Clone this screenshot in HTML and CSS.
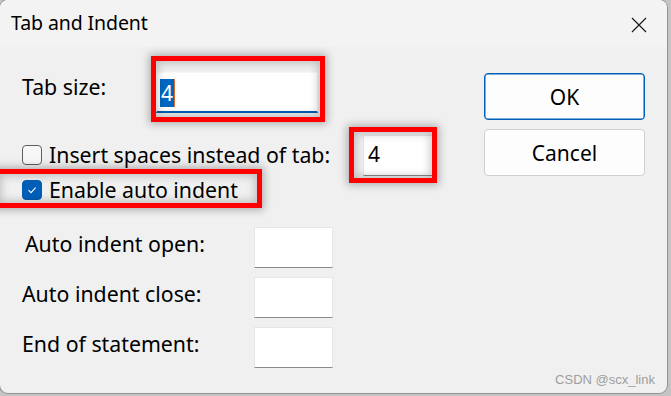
FILE: index.html
```html
<!DOCTYPE html>
<html>
<head>
<meta charset="utf-8">
<link rel="stylesheet" href="styles.css">
</head>
<body>
<div class="desk">
  <div class="dialog">
    <div class="titlebar">
      <span class="title">Tab and Indent</span>
      <svg class="close" width="16" height="16" viewBox="0 0 16 16"><path d="M1 1 L15 15 M15 1 L1 15" stroke="#1b1b1b" stroke-width="1.2" fill="none"/></svg>
    </div>
    <div class="body">
      <div class="form">
        <div class="row r-tab">
          <span class="lbl lbl-tab">Tab size:</span>
          <div class="input wide focused"><span class="sel">4</span><span class="caret"></span></div>
        </div>
        <div class="row r-spaces">
          <span class="cb"></span>
          <span class="lbl lbl-spaces">Insert spaces instead of tab:</span>
          <div class="input mid">4</div>
        </div>
        <div class="row r-auto">
          <span class="cb checked"><svg width="12" height="12" viewBox="0 0 12 12"><path d="M2.5 6.2 L5 8.6 L9.6 3.6" stroke="#fff" stroke-width="1.1" fill="none"/></svg></span>
          <span class="lbl">Enable auto indent</span>
        </div>
        <div class="grid3">
          <span class="lbl glbl glbl-open">Auto indent open:</span><div class="input small"></div>
          <span class="lbl glbl">Auto indent close:</span><div class="input small"></div>
          <span class="lbl glbl">End of statement:</span><div class="input small"></div>
        </div>
      </div>
      <div class="buttons">
        <button class="btn btn-default">OK</button>
        <button class="btn">Cancel</button>
      </div>
    </div>
    <div class="mark mark-tab"></div>
    <div class="mark mark-spaces"></div>
    <div class="mark mark-auto"></div>
    <div class="watermark">CSDN @scx_link</div>
  </div>
</div>
</body>
</html>
```
FILE: styles.css
```css
html, body { margin: 0; padding: 0; }
body { width: 671px; height: 396px; overflow: hidden; background: #b9b9b9; font-family: "Noto Sans", "Open Sans", sans-serif; }
.desk { width: 671px; height: 396px; background: #c4c4c4; }
.dialog { position: relative; width: 667px; height: 393px; background: #f0f0f0; border-radius: 8px; box-shadow: 0 0 0 1px rgba(0,0,0,0.25); overflow: hidden; }
.titlebar { height: 47px; background: #f3f3f3; display: flex; align-items: center; justify-content: space-between; padding: 0 20px 0 11px; }
.title { font-size: 19.5px; color: #000; margin-top: -2px; letter-spacing: -0.1px; }
.close { margin-top: 2px; }
.body { display: flex; justify-content: space-between; padding: 0 22px 0 22px; }
.form { display: flex; flex-direction: column; }
.lbl { font-size: 21.3px; line-height: 24px; color: #000; white-space: nowrap; }
.row { display: flex; align-items: flex-start; }
.r-tab { margin-top: 25px; height: 41px; }
.lbl-tab { width: 134px; margin-top: 3px; }
.r-spaces { margin-top: 22px; height: 41px; }
.r-spaces .cb { margin-top: 10px; }
.lbl-spaces { margin-top: 8px; width: 314px; }
.r-auto { margin-top: 2px; height: 24px; }
.r-auto .cb { margin-top: 2px; }
.cb { width: 18px; height: 18px; border: 1px solid #5f5f5f; border-radius: 4px; background: #f7f7f7; margin-right: 7px; display: flex; align-items: center; justify-content: center; flex: none; }
.cb.checked { background: #005fb8; border-color: #005fb8; }
.input { background: #fff; height: 41px; box-sizing: border-box; border: 1px solid #e6e6e6; border-bottom: 1px solid #8a8a8a; font-size: 21px; line-height: 24px; }
.wide { width: 162px; border-color: #f6f6f6; border-bottom: 2px solid #005fb8; padding: 1px 0 0 3px; display: flex; align-items: center; }
.sel { background: #0067c0; color: #fff; height: 28px; line-height: 28px; font-size: 21px; padding: 0 1px; }
.caret { width: 1px; height: 28px; background: #d86a2a; }
.mid { width: 70px; padding: 6px 0 0 4px; font-size: 21px; }
.grid3 { display: grid; grid-template-columns: 232px 79px; grid-auto-rows: 41px; row-gap: 9px; margin-top: 25px; }
.glbl { margin-top: 5px; }
.glbl-open { padding-left: 3px; }
.small { width: 79px; }
.buttons { display: flex; flex-direction: column; gap: 9px; margin-top: 26px; }
.btn { width: 161px; height: 47px; background: #fdfdfd; border: 1px solid #d0d0d0; border-radius: 4px; font-family: "Noto Sans", "Open Sans", sans-serif; font-size: 21px; color: #000; padding: 0; }
.btn-default { border: 1px solid #005fb8; box-shadow: inset 0 0 0 0.5px #005fb8; }
.mark { position: absolute; border: 5px solid #ff0000; box-shadow: 0 0 8px 2px rgba(0,0,0,0.28), inset 0 0 8px 2px rgba(0,0,0,0.22); box-sizing: border-box; }
.mark-tab { left: 151px; top: 56px; width: 174px; height: 66px; }
.mark-spaces { left: 349px; top: 127px; width: 88px; height: 56px; }
.mark-auto { left: -6px; top: 169px; width: 268px; height: 39px; }
.watermark { position: absolute; right: 12px; bottom: 6px; font-family: "Liberation Sans", Arial, sans-serif; font-size: 13px; color: #9e9e9e; }
```
